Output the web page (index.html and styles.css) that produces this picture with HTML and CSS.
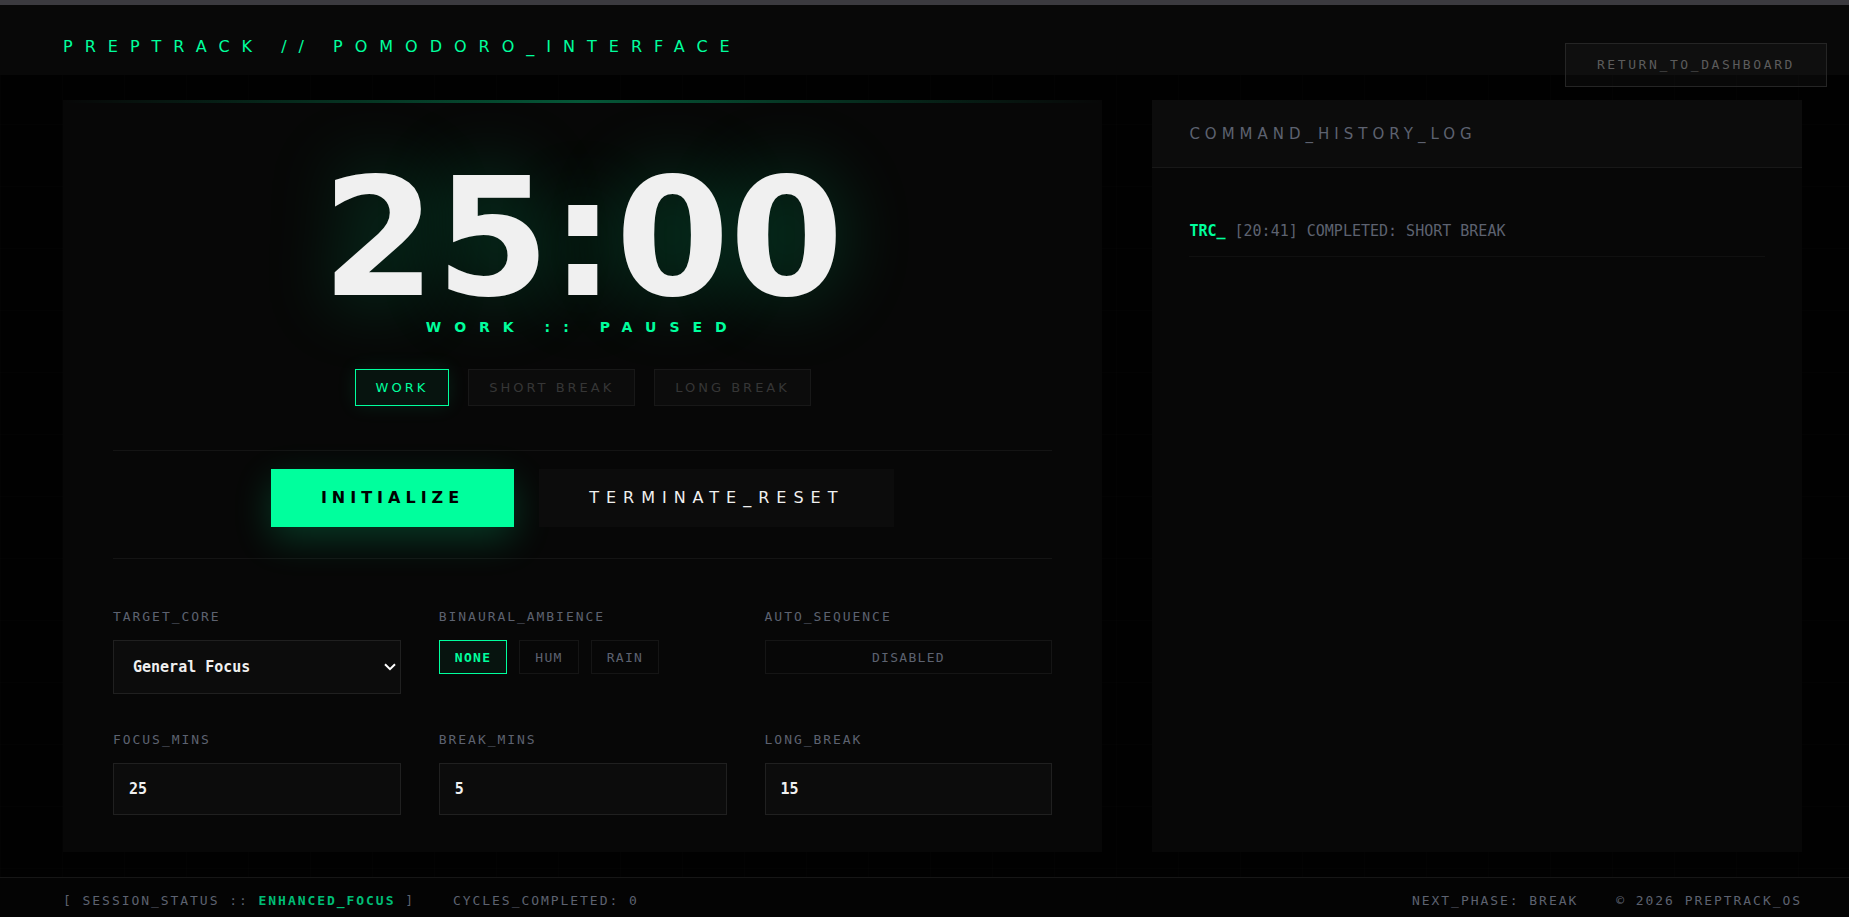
FILE: index.html
```html
<!DOCTYPE html>
<html lang="en">
<head>
<meta charset="utf-8">
<title>PrepTrack Pomodoro</title>
<link rel="stylesheet" href="styles.css">
</head>
<body>
<header class="topbar">
  <h1 class="brand">PREPTRACK // POMODORO_INTERFACE</h1>
  <a class="return" href="#">RETURN_TO_DASHBOARD</a>
</header>
<main class="layout">
  <section class="panel timer-panel">
    <div class="clock">
      <div class="time">25:00</div>
      <div class="state">WORK :: PAUSED</div>
      <div class="modes">
        <button class="mode active">WORK</button>
        <button class="mode">SHORT BREAK</button>
        <button class="mode">LONG BREAK</button>
      </div>
    </div>
    <div class="actions">
      <button class="action primary">INITIALIZE</button>
      <button class="action">TERMINATE_RESET</button>
    </div>
    <div class="settings">
      <div class="field">
        <label class="label" for="target">TARGET_CORE</label>
        <div class="select-wrap">
          <select class="control select" id="target"><option>General Focus</option></select>
          <svg class="chevron" viewBox="0 0 12 8" aria-hidden="true"><path d="M1 1.2 6 6.2 11 1.2"/></svg>
        </div>
      </div>
      <div class="field">
        <span class="label">BINAURAL_AMBIENCE</span>
        <div class="chips">
          <button class="chip active">NONE</button>
          <button class="chip">HUM</button>
          <button class="chip">RAIN</button>
        </div>
      </div>
      <div class="field">
        <span class="label" id="auto">AUTO_SEQUENCE</span>
        <button class="chip" aria-describedby="auto">DISABLED</button>
      </div>
      <div class="field">
        <label class="label" for="focus">FOCUS_MINS</label>
        <input class="control" id="focus" type="text" inputmode="numeric" value="25">
      </div>
      <div class="field">
        <label class="label" for="break">BREAK_MINS</label>
        <input class="control" id="break" type="text" inputmode="numeric" value="5">
      </div>
      <div class="field">
        <label class="label" for="long">LONG_BREAK</label>
        <input class="control" id="long" type="text" inputmode="numeric" value="15">
      </div>
    </div>
  </section>
  <section class="panel">
    <h2 class="log-title">COMMAND_HISTORY_LOG</h2>
    <ul class="log">
      <li class="entry"><b class="tag">TRC_</b> [20:41] COMPLETED: SHORT BREAK</li>
    </ul>
  </section>
</main>
<footer class="statusbar">
  <div class="group">
    <span>[ SESSION_STATUS :: <b class="status">ENHANCED_FOCUS</b> ]</span>
    <span>CYCLES_COMPLETED: 0</span>
  </div>
  <div class="group">
    <span>NEXT_PHASE: BREAK</span>
    <span>© 2026 PREPTRACK_OS</span>
  </div>
</footer>
</body>
</html>
```
FILE: styles.css
```css
:root {
  --accent: #00ff9d;
  --muted: #5d6270;
  --text: #f0f0f0;
  --display: "DejaVu Sans", Verdana, sans-serif;
  --mono: "DejaVu Sans Mono", monospace;
}
* { box-sizing: border-box; }
body {
  margin: 0;
  min-height: 100vh;
  display: flex;
  flex-direction: column;
  background-color: #010101;
  background-image:
    linear-gradient(90deg, rgba(255,255,255,.008) 1px, transparent 1px),
    linear-gradient(rgba(255,255,255,.008) 1px, transparent 1px);
  background-size: 62px 62px;
  color: var(--text);
  font-family: var(--mono);
}
button, input, select { font-family: inherit; color: inherit; border-radius: 0; margin: 0; }
button { cursor: pointer; }

.topbar {
  position: relative;
  height: 75px;
  padding: 13px 63px 0;
  display: flex;
  align-items: center;
  border-top: 5px solid #3b3a3f;
  background: #080808;
}
.brand {
  margin: 0;
  font: 400 16px/24px var(--display);
  letter-spacing: 12px;
  color: var(--accent);
}
.return {
  position: absolute;
  top: 38px;
  right: 22px;
  height: 44px;
  padding: 0 31px;
  border: 1px solid #252525;
  background: rgba(255,255,255,.03);
  color: #5c5c5c;
  font-size: 13px;
  line-height: 42px;
  letter-spacing: .2em;
  text-decoration: none;
}

.layout {
  flex: 1;
  display: grid;
  grid-template-columns: 1.6fr 1fr;
  gap: 50px;
  padding: 25px 47px 25px 63px;
}
.panel { background: #070707; }
.timer-panel {
  padding: 0 50px 37px;
  background: linear-gradient(90deg, transparent, rgba(0,255,157,.32), transparent) top / 100% 3px no-repeat #070707;
}
.clock {
  display: flex;
  flex-direction: column;
  align-items: center;
  padding: 61px 0 44px;
  border-bottom: 1px solid #141414;
}
.time {
  font: 700 164px/156px var(--display);
  text-shadow: 0 0 75px rgba(0,255,157,.25);
}
.state {
  font: 700 14px/20px var(--display);
  letter-spacing: 13px;
  color: var(--accent);
}
.modes { display: flex; gap: 19px; margin-top: 32px; }
.mode {
  height: 37px;
  padding: 0 20px;
  border: 1px solid #181818;
  background: #0c0c0c;
  color: #363636;
  font: 400 13px/20px var(--display);
  letter-spacing: 3px;
}
.mode.active {
  border-color: var(--accent);
  background: #07140f;
  color: var(--accent);
  box-shadow: 0 0 19px rgba(0,255,157,.1);
}
.actions {
  display: flex;
  justify-content: center;
  gap: 25px;
  padding: 18px 0 31px;
  border-bottom: 1px solid #141414;
}
.action {
  height: 58px;
  padding: 0 50px;
  border: 0;
  background: #0c0c0c;
  color: var(--text);
  font: 400 16px/24px var(--display);
  letter-spacing: 7px;
}
.action.primary {
  background: var(--accent);
  color: #000;
  font-weight: 700;
  letter-spacing: 5px;
  box-shadow: 0 12px 38px rgba(0,255,157,.2);
}

.settings {
  display: grid;
  grid-template-columns: repeat(3, 1fr);
  gap: 36px 38px;
  padding-top: 48px;
}
.field { display: flex; flex-direction: column; gap: 13px; }
.label {
  font-size: 13px;
  line-height: 20px;
  letter-spacing: .15em;
  color: var(--muted);
}
.control {
  width: 100%;
  height: 52px;
  padding: 0 15px;
  border: 1px solid #202020;
  background: #0c0c0c;
  font-size: 15px;
  font-weight: 700;
}
.select-wrap { display: grid; align-items: center; }
.select-wrap > * { grid-area: 1 / 1; }
.select { height: 54px; padding: 0 19px; appearance: none; }
.chevron {
  width: 12px;
  height: 8px;
  margin-right: 5px;
  justify-self: end;
  pointer-events: none;
  fill: none;
  stroke: #fff;
  stroke-width: 2;
}
.chips { display: flex; gap: 12px; }
.chip {
  height: 34px;
  padding: 0 15px;
  border: 1px solid #151515;
  background: transparent;
  color: var(--muted);
  font-size: 13px;
  letter-spacing: .1em;
}
.chip.active {
  border-color: var(--accent);
  background: #07140f;
  color: var(--accent);
  font-weight: 700;
}

.log-title {
  margin: 0;
  padding: 24px 37px 23px;
  border-bottom: 1px solid #181818;
  background: #0c0c0c;
  color: var(--muted);
  font: 400 15px/20px var(--display);
  letter-spacing: 5px;
}
.log { margin: 0; padding: 37px; list-style: none; }
.entry {
  padding: 15px 0 14px;
  border-bottom: 1px solid #101010;
  color: var(--muted);
  font-size: 15px;
  line-height: 22px;
}
.tag { color: var(--accent); }

.statusbar {
  height: 40px;
  padding: 7px 47px 0 63px;
  display: flex;
  justify-content: space-between;
  border-top: 1px solid #161616;
  background: #040404;
  color: var(--muted);
  font-size: 13px;
  line-height: 32px;
  letter-spacing: .15em;
}
.group { display: flex; gap: 38px; }
.status { color: #00bd76; }
```
